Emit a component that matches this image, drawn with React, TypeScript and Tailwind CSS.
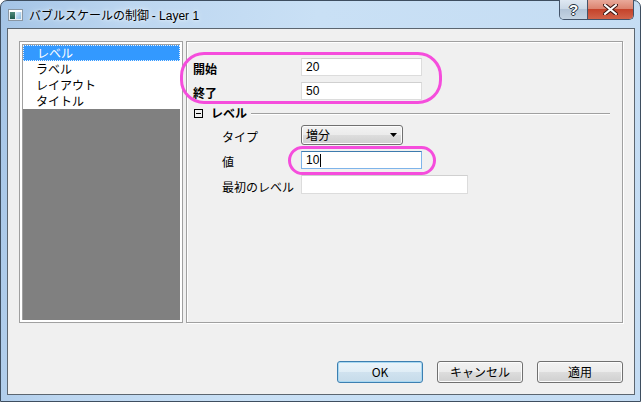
import React from "react";

const jp = { fontFamily: '"Noto Sans CJK JP", "Noto Sans", sans-serif' };
const latin = { fontFamily: '"Liberation Sans", "Noto Sans CJK JP", sans-serif' };

function AppIcon() {
  return (
    <svg width="15" height="12" viewBox="0 0 15 12">
      <rect x="0.5" y="0.5" width="14" height="11" fill="#e8eef4" stroke="#8a97a4" />
      <rect x="1" y="1" width="13" height="2" fill="#ffffff" />
      <defs>
        <linearGradient id="ig" x1="0" y1="0" x2="0" y2="1">
          <stop offset="0" stopColor="#4f8a7a" />
          <stop offset="1" stopColor="#1f5a4c" />
        </linearGradient>
        <linearGradient id="ib" x1="0" y1="0" x2="1" y2="1">
          <stop offset="0" stopColor="#d8ecfa" />
          <stop offset="1" stopColor="#8fbde2" />
        </linearGradient>
      </defs>
      <rect x="2" y="3" width="5" height="7" fill="url(#ig)" />
      <rect x="8" y="3" width="5" height="7" fill="url(#ib)" />
    </svg>
  );
}

function CaptionButtons() {
  return (
    <div className="flex -mt-px h-[20px] border border-t-0 border-[#44546a] rounded-b-[5px] overflow-hidden">
      <div className="w-[28px] h-full flex items-center justify-center bg-[linear-gradient(#dfe8f2_0%,#cbd8e6_45%,#b3c4d7_50%,#c4d3e3_100%)] border-r border-[#44546a]">
        <span
          className="text-[15px] font-bold text-white leading-none [text-shadow:0_0_1px_#2a3440,1px_0_0_#2a3440,-1px_0_0_#2a3440,0_1px_0_#2a3440,0_-1px_0_#2a3440]"
          style={latin}
        >
          ?
        </span>
      </div>
      <div className="w-[45px] h-full flex items-center justify-center bg-[linear-gradient(#e9a99a_0%,#dc8470_45%,#c5432b_50%,#d2634a_100%)]">
        <svg width="15" height="11" viewBox="0 0 15 11">
          <path d="M2 1 L13 10 M13 1 L2 10" stroke="#3a1410" strokeWidth="4" strokeLinecap="square" />
          <path d="M2 1 L13 10 M13 1 L2 10" stroke="#ffffff" strokeWidth="2" strokeLinecap="square" />
        </svg>
      </div>
    </div>
  );
}

function ListPanel() {
  const items = ["レベル", "ラベル", "レイアウト", "タイトル"];
  return (
    <div className="w-[164px] h-[282px] border border-[#a0a0a0] p-[2px] bg-white flex">
      <div className="flex-1 flex flex-col border-t border-l border-[#a0a0a0]">
        <div className="bg-white">
          {items.map((t, i) => (
            <div
              key={t}
              className={
                i === 0
                  ? "h-[16px] flex items-center pl-[13px] bg-[#3399ff] text-white border border-dotted border-[#e8f2ff]"
                  : "h-[16px] flex items-center pl-[13px] text-black"
              }
            >
              <span className="text-[12px] leading-none">{t}</span>
            </div>
          ))}
        </div>
        <div className="flex-1 bg-[#808080]" />
      </div>
    </div>
  );
}

function TextBox({ value, width, focused }: { value: string; width: number; focused?: boolean }) {
  return (
    <div
      className={
        focused
          ? "h-full bg-white border border-[#7eb4ea] border-t-[#3d7bad] flex items-center pl-[4px]"
          : "h-full bg-white border border-[#dcdcdc] border-t-[#d0d0d0] flex items-center pl-[4px]"
      }
      style={{ width }}
    >
      <span className="text-[12px] leading-none text-black" style={latin}>
        {value}
      </span>
      {focused && <span className="w-px h-[13px] bg-black ml-px" />}
    </div>
  );
}

function Field({
  label,
  bold,
  indent,
  height,
  children,
}: {
  label: string;
  bold?: boolean;
  indent?: boolean;
  height: number;
  children: React.ReactNode;
}) {
  return (
    <div className="flex items-center" style={{ height }}>
      <div className={indent ? "w-[108px] pl-[29px]" : "w-[108px]"}>
        <span className={bold ? "text-[12px] font-bold leading-none" : "text-[12px] leading-none"}>{label}</span>
      </div>
      <div className="h-full flex">{children}</div>
    </div>
  );
}

function SettingsPanel() {
  return (
    <div className="relative w-[437px] h-[282px] border border-[#a0a0a0] shadow-[inset_1px_1px_0_#ffffff,1px_1px_0_#ffffff] pl-[6px] flex flex-col">
      <div className="mt-[16px]">
        <Field label="開始" bold height={18}>
          <TextBox value="20" width={121} />
        </Field>
      </div>
      <div className="mt-[6px]">
        <Field label="終了" bold height={18}>
          <TextBox value="50" width={121} />
        </Field>
      </div>

      {/* collapsible section header */}
      <div className="mt-[6px] h-[14px] flex items-center">
        <div className="ml-[1px] w-[9px] h-[9px] border border-black flex items-center justify-center">
          <div className="w-[5px] h-px bg-black" />
        </div>
        <span className="ml-[8px] text-[12px] font-bold leading-none">レベル</span>
        <div className="ml-[4px] mr-[12px] flex-1 h-px bg-[#a0a0a0] shadow-[0_1px_0_#ffffff]" />
      </div>

      <div className="mt-[5px]">
        <Field label="タイプ" indent height={20}>
          <div className="w-[102px] h-full rounded-[3px] border border-[#707070] bg-[linear-gradient(#f2f2f2_0%,#ebebeb_50%,#dddddd_51%,#cfcfcf_100%)] shadow-[inset_0_0_0_1px_#fcfcfc] flex items-center pl-[4px] pr-[5px]">
            <span className="flex-1 text-[12px] leading-none">増分</span>
            <svg width="7" height="4" viewBox="0 0 7 4">
              <path d="M0 0 H7 L3.5 4 Z" fill="#000" />
            </svg>
          </div>
        </Field>
      </div>
      <div className="mt-[6px]">
        <Field label="値" indent height={18}>
          <TextBox value="10" width={121} focused />
        </Field>
      </div>
      <div className="mt-[6px]">
        <Field label="最初のレベル" indent height={19}>
          <TextBox value="" width={167} />
        </Field>
      </div>

      {/* highlight marks */}
      <div className="absolute left-[-7px] top-[10px] w-[262px] h-[52px] rounded-[24px] border-[3px] border-[#f54ddc] pointer-events-none" />
      <div className="absolute left-[101px] top-[104px] w-[148px] h-[29px] rounded-full border-[3px] border-[#f54ddc] pointer-events-none" />
    </div>
  );
}

function DlgButton({ label, isDefault }: { label: string; isDefault?: boolean }) {
  return (
    <div
      className={
        isDefault
          ? "w-[86px] h-[22px] rounded-[3px] border border-[#3c7fb1] bg-[linear-gradient(#eaf4fa_0%,#e0edf6_50%,#d0e2ef_51%,#c6dbea_100%)] shadow-[inset_0_0_0_1px_#a8d8f2] flex items-center justify-center"
          : "w-[86px] h-[22px] rounded-[3px] border border-[#707070] bg-[linear-gradient(#f2f2f2_0%,#ebebeb_50%,#dddddd_51%,#cfcfcf_100%)] shadow-[inset_0_0_0_1px_#fcfcfc] flex items-center justify-center"
      }
    >
      <span className="text-[12px] leading-none text-black">{label}</span>
    </div>
  );
}

export default function App() {
  return (
    <div className="w-[642px] h-[402px] bg-white" style={jp}>
      <div className="w-[641px] h-[402px] rounded-t-[7px] border border-[#3e4e60] bg-[linear-gradient(100deg,#a4c4e6_0%,#bcd6f0_18%,#c9e0f5_45%,#c4dcf3_100%)] flex flex-col">
        {/* title bar */}
        <div className="h-[27px] flex items-start">
          <div className="ml-[7px] mt-[8px]">
            <AppIcon />
          </div>
          <div className="ml-[6px] mt-[6px] text-[12px] leading-[16px] text-black [text-shadow:0_0_6px_#eaf4fc,0_0_3px_#eaf4fc]">
            バブルスケールの制御 <span style={latin}>- Layer 1</span>
          </div>
          <div className="flex-1" />
          <div className="mr-[6px]">
            <CaptionButtons />
          </div>
        </div>

        {/* client area */}
        <div className="ml-[6px] mr-[5px] mb-[6px] flex-1 border border-[#5c6670] bg-[#f0f0f0] pt-[12px] px-[11px] pb-[11px] flex flex-col">
          <div className="flex gap-[3px]">
            <ListPanel />
            <SettingsPanel />
          </div>
          <div className="mt-auto flex justify-end gap-[14px]">
            <DlgButton label="OK" isDefault />
            <DlgButton label="キャンセル" />
            <DlgButton label="適用" />
          </div>
        </div>
      </div>
    </div>
  );
}
